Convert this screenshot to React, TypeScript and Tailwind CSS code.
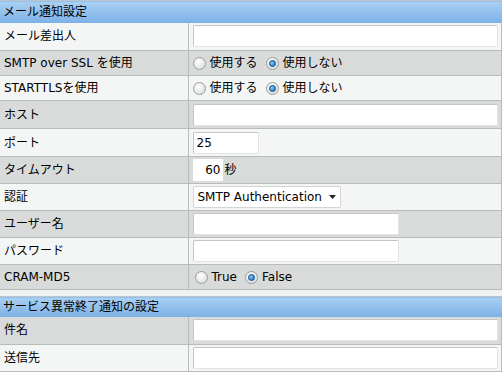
import React from 'react';

const font = { fontFamily: '"DejaVu Sans", Verdana, "Noto Sans CJK JP", sans-serif' };

function Radio({ checked }: { checked?: boolean }) {
  return (
    <span className="relative inline-block w-[13px] h-[13px] rounded-full border border-[#9a9d9c] bg-[radial-gradient(circle_at_40%_35%,#ffffff,#d4d6d6)] align-middle shrink-0">
      {checked && (
        <span className="absolute left-[2px] top-[2px] w-[7px] h-[7px] rounded-full bg-[radial-gradient(circle_at_35%_35%,#7fd0ff,#0a63b8)] border border-[#1d4f8a]" />
      )}
    </span>
  );
}

function RadioGroup({ options, value }: { options: string[]; value: number }) {
  return (
    <div className="flex items-center gap-[8px]">
      {options.map((o, i) => (
        <label key={o} className="flex items-center gap-[4px]">
          <Radio checked={i === value} />
          <span>{o}</span>
        </label>
      ))}
    </div>
  );
}

function TextBox({ w, value, right }: { w: string; value?: string; right?: boolean }) {
  return (
    <div
      className={`${w} h-[22px] bg-white border border-t-[#c4c6c6] border-l-[#c4c6c6] border-r-[#e2e4e4] border-b-[#e2e4e4] rounded-[2px] flex items-center px-[3px] ${right ? 'justify-end' : ''}`}
    >
      {value}
    </div>
  );
}

function Header({ title }: { title: string }) {
  return (
    <tr>
      <td
        colSpan={2}
        className="h-[20px] px-[3px] bg-gradient-to-b from-[#a9d0f2] to-[#7cb0e6] border-t border-[#bcc4cc] text-black leading-none"
      >
        {title}
      </td>
    </tr>
  );
}

function Row({
  label,
  gray,
  h,
  children,
}: {
  label: string;
  gray?: boolean;
  h: string;
  children: React.ReactNode;
}) {
  const bg = gray ? 'bg-[#d8dbda]' : 'bg-[#f4f6f5]';
  return (
    <tr className={bg}>
      <td className={`${h} w-[188px] pl-[4px] border-b border-r border-[#b8bcbb] whitespace-nowrap`}>{label}</td>
      <td className={`${h} pl-[4px] pr-[3px] border-b border-r border-[#b8bcbb]`}>{children}</td>
    </tr>
  );
}

export default function App() {
  return (
    <div className="w-[504px] h-[374px] bg-white text-[12px] text-black overflow-hidden" style={font}>
      <table className="w-[502px] border-collapse table-fixed">
        <colgroup>
          <col className="w-[188px]" />
          <col />
        </colgroup>
        <tbody>
          <tr>
            <td
              colSpan={2}
              className="h-[22px] px-[3px] bg-gradient-to-b from-[#a9d0f2] to-[#7cb0e6] border-t border-[#bcc4cc]"
            >
              メール通知設定
            </td>
          </tr>
          <Row label="メール差出人" h="h-[28px]">
            <TextBox w="w-full" />
          </Row>
          <Row label="SMTP over SSL を使用" gray h="h-[25px]">
            <RadioGroup options={['使用する', '使用しない']} value={1} />
          </Row>
          <Row label="STARTTLSを使用" h="h-[25px]">
            <RadioGroup options={['使用する', '使用しない']} value={1} />
          </Row>
          <Row label="ホスト" gray h="h-[28px]">
            <TextBox w="w-full" />
          </Row>
          <Row label="ポート" h="h-[28px]">
            <TextBox w="w-[66px]" value="25" />
          </Row>
          <Row label="タイムアウト" gray h="h-[27px]">
            <div className="flex items-center gap-[2px]">
              <div className="w-[30px] h-[22px] bg-white flex items-center justify-end pr-[2px]">60</div>
              <span>秒</span>
            </div>
          </Row>
          <Row label="認証" h="h-[27px]">
            <div className="w-[148px] h-[22px] bg-white border border-[#d4d6d6] rounded-[2px] flex items-center justify-between pl-[4px] pr-[4px]">
              <span>SMTP Authentication</span>
              <svg width="7" height="4" viewBox="0 0 7 4" className="shrink-0">
                <path d="M0 0h7L3.5 4z" fill="#222" />
              </svg>
            </div>
          </Row>
          <Row label="ユーザー名" gray h="h-[27px]">
            <TextBox w="w-[206px]" />
          </Row>
          <Row label="パスワード" h="h-[27px]">
            <TextBox w="w-[206px]" />
          </Row>
          <Row label="CRAM-MD5" gray h="h-[25px]">
            <div className="pl-[2px]">
              <RadioGroup options={['True', 'False']} value={1} />
            </div>
          </Row>
          <tr>
            <td colSpan={2} className="h-[7px] bg-[#eef2f1] p-0" />
          </tr>
          <Header title="サービス異常終了通知の設定" />
          <Row label="件名" gray h="h-[28px]">
            <TextBox w="w-full" />
          </Row>
          <Row label="送信先" h="h-[27px]">
            <TextBox w="w-full" />
          </Row>
        </tbody>
      </table>
    </div>
  );
}
